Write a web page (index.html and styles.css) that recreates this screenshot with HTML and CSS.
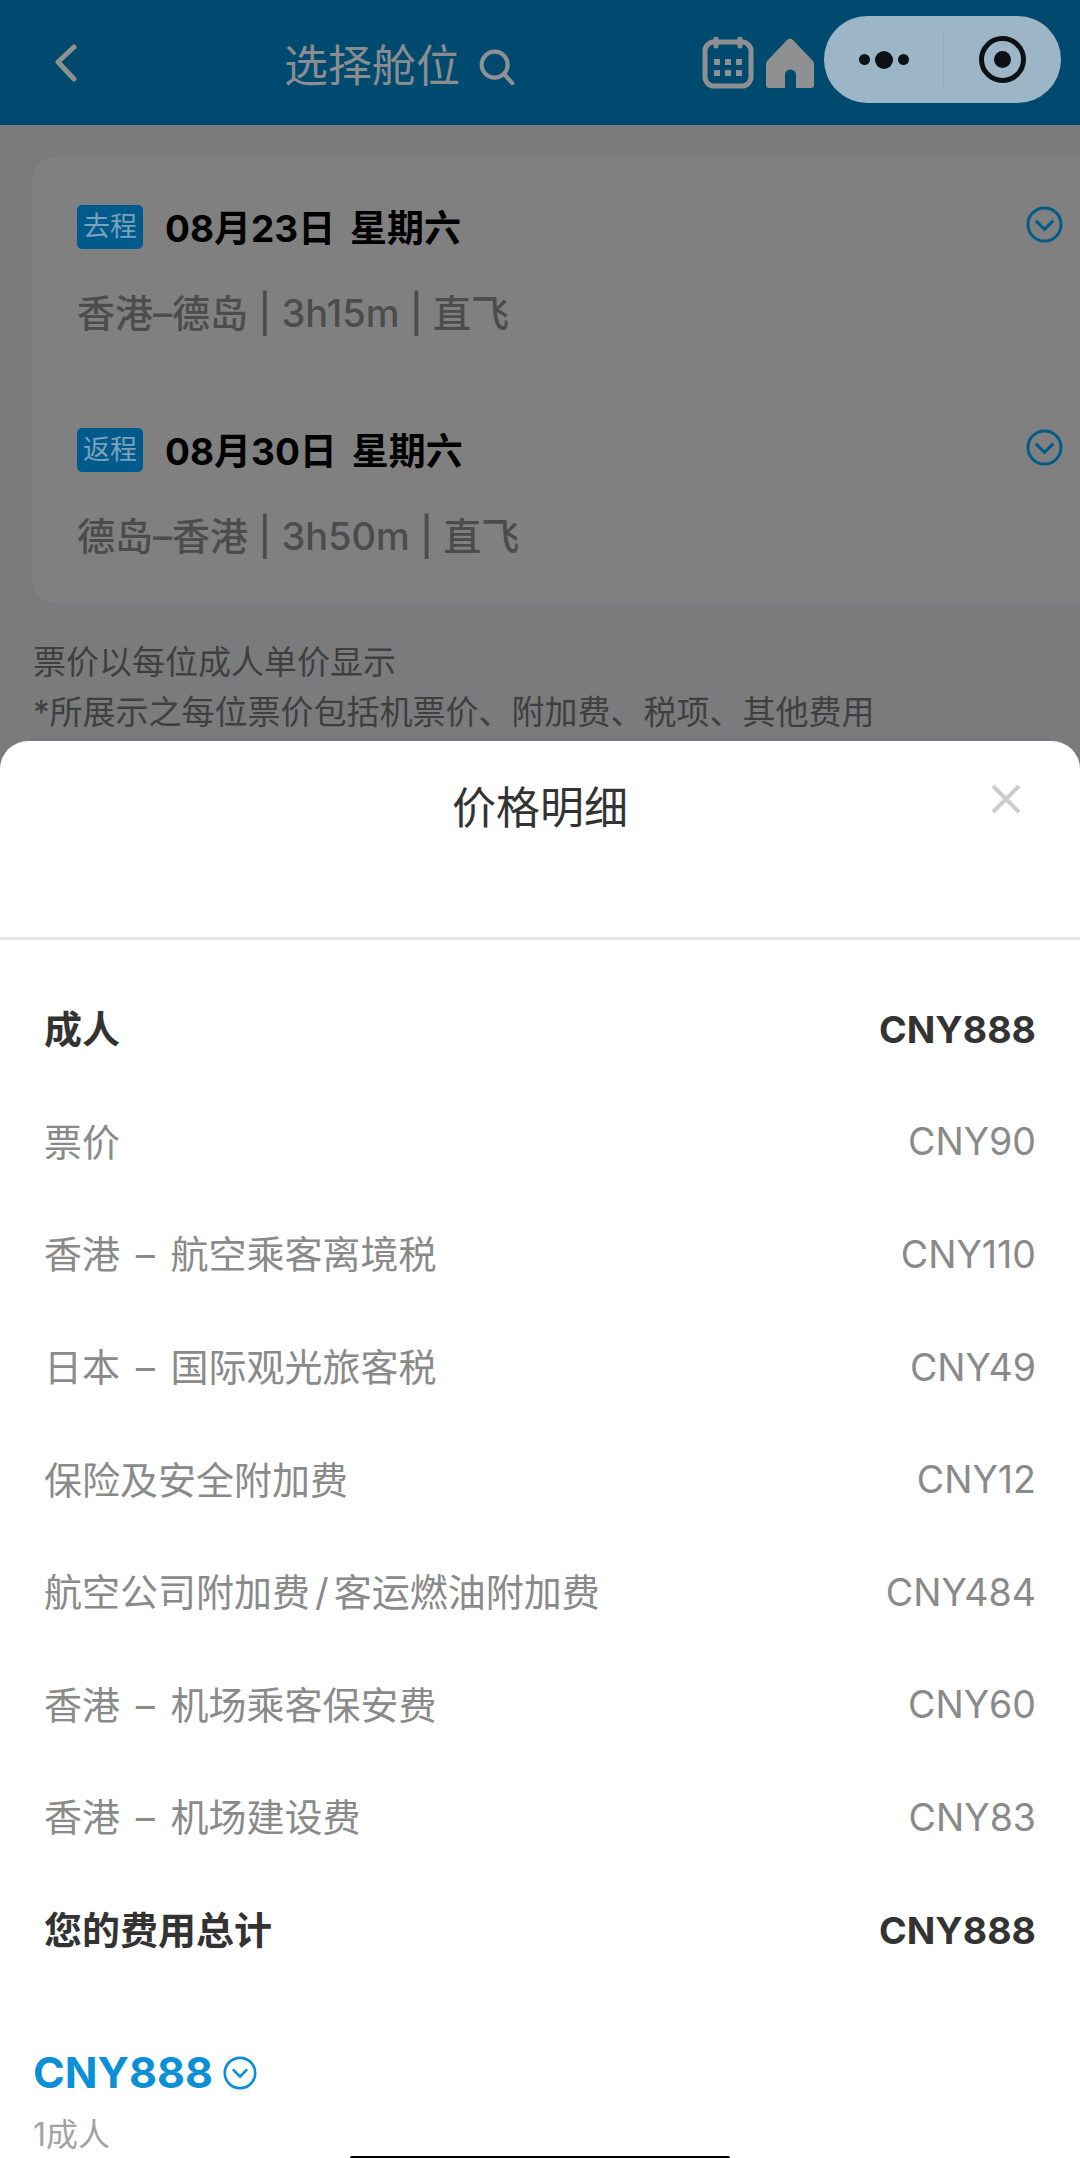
FILE: index.html
```html
<!DOCTYPE html>
<html lang="zh-CN">
<head>
  <meta charset="UTF-8" />
  <meta name="viewport" content="width=device-width, initial-scale=1.0"/>
  <title>选择舱位</title>
  <link rel="stylesheet" href="styles.css">
</head>
<body>
  <header class="topbar">
    <svg class="back-icon" viewBox="0 0 24 38"><path d="M20 3 4 18l16 17" /></svg>
    <div class="topbar-title">
      <span>选择舱位</span>
      <svg class="search-icon" viewBox="0 0 40 40"><circle cx="18" cy="18" r="14" /><path d="m28 28 9 10" /></svg>
    </div>
    <svg class="calendar-icon" viewBox="0 0 52 52">
      <rect x="3" y="5" width="46" height="44" rx="9" />
      <path d="M14 2v7M38 2v7" />
      <path class="dots" d="M12 22h6v6h-6zM23 22h6v6h-6zM34 22h6v6h-6zM12 33h6v6h-6zM23 33h6v6h-6zM34 33h6v6h-6z" />
    </svg>
    <svg class="home-icon" viewBox="0 0 48 50"><path d="M21 2a4 4 0 0 1 6 0l19 20a5 5 0 0 1 2 4v21a3 3 0 0 1-3 3H30V37a5 5 0 0 0-11 0v13H3a3 3 0 0 1-3-3V26a5 5 0 0 1 2-4z" /></svg>
    <div class="capsule">
      <div class="capsule-more"><i class="dot"></i><i class="dot dot-big"></i><i class="dot"></i></div>
      <div class="capsule-close"><i class="ring"></i></div>
    </div>
  </header>

  <main class="content">
    <section class="trip-card">
      <div class="trip">
        <div class="trip-head">
          <span class="tag">去程</span>
          <span class="trip-date">08月23日 星期六</span>
          <svg class="chevron-icon" viewBox="0 0 38 38"><circle cx="19" cy="19" r="17" /><path d="m10 15 9 9 9-9" /></svg>
        </div>
        <p class="trip-info">香港–德岛 | 3h15m | 直飞</p>
      </div>
      <div class="trip">
        <div class="trip-head">
          <span class="tag">返程</span>
          <span class="trip-date">08月30日 星期六</span>
          <svg class="chevron-icon" viewBox="0 0 38 38"><circle cx="19" cy="19" r="17" /><path d="m10 15 9 9 9-9" /></svg>
        </div>
        <p class="trip-info">德岛–香港 | 3h50m | 直飞</p>
      </div>
    </section>
    <p class="note">票价以每位成人单价显示</p>
    <p class="note">*所展示之每位票价包括机票价、附加费、税项、其他费用</p>
  </main>

  <!-- 价格明细弹层 -->
  <section class="sheet">
    <div class="sheet-head">
      <h2 class="sheet-title">价格明细</h2>
      <svg class="close-icon" viewBox="0 0 32 32"><path d="m3 3 26 26M29 3 3 29" /></svg>
    </div>
    <ul class="price-list">
      <li class="price-row strong"><span class="price-name">成人</span><span class="price-value">CNY888</span></li>
      <li class="price-row"><span class="price-name">票价</span><span class="price-value">CNY90</span></li>
      <li class="price-row"><span class="price-name">香港 – 航空乘客离境税</span><span class="price-value">CNY110</span></li>
      <li class="price-row"><span class="price-name">日本 – 国际观光旅客税</span><span class="price-value">CNY49</span></li>
      <li class="price-row"><span class="price-name">保险及安全附加费</span><span class="price-value">CNY12</span></li>
      <li class="price-row"><span class="price-name">航空公司附加费<span class="slash">/</span>客运燃油附加费</span><span class="price-value">CNY484</span></li>
      <li class="price-row"><span class="price-name">香港 – 机场乘客保安费</span><span class="price-value">CNY60</span></li>
      <li class="price-row"><span class="price-name">香港 – 机场建设费</span><span class="price-value">CNY83</span></li>
      <li class="price-row strong"><span class="price-name">您的费用总计</span><span class="price-value">CNY888</span></li>
    </ul>
    <div class="sheet-foot">
      <div class="total">
        <span>CNY888</span>
        <svg class="total-icon" viewBox="0 0 38 38"><circle cx="19" cy="19" r="17" /><path d="m11 15 8 8 8-8" /></svg>
      </div>
      <div class="passengers">1成人</div>
    </div>
  </section>
  <div class="home-bar"></div>
</body>
</html>
```

FILE: styles.css
```css
* {
  margin: 0;
  padding: 0;
  box-sizing: border-box;
}

body {
  position: relative;
  width: 1080px;
  height: 2158px;
  overflow: hidden;
  font-family: Inter, "Noto Sans CJK SC", sans-serif;
  background-color: #7b7b7d;
}

svg {
  display: block;
  flex: none;
  fill: none;
}

/* top bar */
.topbar {
  display: flex;
  align-items: center;
  height: 125px;
  padding: 0 19px 0 54px;
  background-color: #004a70;
}

.back-icon {
  width: 24px;
  height: 38px;
  stroke: #8e9092;
  stroke-width: 5;
  stroke-linecap: round;
  stroke-linejoin: round;
}

.topbar-title {
  display: flex;
  align-items: center;
  gap: 18px;
  margin-left: 206px;
  font-size: 44px;
  color: #8a8d90;
}

.search-icon {
  width: 37px;
  height: 37px;
  margin-top: 8px;
  stroke: #8e9092;
  stroke-width: 4.5;
  stroke-linecap: round;
}

.calendar-icon {
  width: 52px;
  height: 52px;
  margin-left: 187px;
  stroke: #8e9092;
  stroke-width: 5;
  stroke-linecap: round;
}

.calendar-icon .dots {
  fill: #8e9092;
  stroke: none;
}

.home-icon {
  width: 48px;
  height: 50px;
  margin-left: 12px;
  fill: #8e9092;
}

.capsule {
  display: flex;
  align-items: center;
  width: 237px;
  height: 87px;
  margin-left: auto;
  margin-bottom: 6px;
  border-radius: 44px;
  background-color: #9db6c7;
}

.capsule-more {
  display: flex;
  align-items: center;
  justify-content: center;
  gap: 5px;
  width: 120px;
  height: 56px;
  border-right: 1px solid #93acbd;
}

.dot {
  width: 11px;
  height: 11px;
  border-radius: 50%;
  background-color: #0d1114;
}

.dot-big {
  width: 18px;
  height: 18px;
}

.capsule-close {
  display: flex;
  flex: 1;
  justify-content: center;
}

.ring {
  display: flex;
  align-items: center;
  justify-content: center;
  width: 47px;
  height: 47px;
  border: 5px solid #0d1114;
  border-radius: 50%;
}

.ring::after {
  content: "";
  width: 17px;
  height: 17px;
  border-radius: 50%;
  background-color: #0d1114;
}

/* dimmed page behind the sheet */
.content {
  padding: 32px 0 0 33px;
}

.trip-card {
  display: flex;
  flex-direction: column;
  gap: 91px;
  height: 446px;
  margin: 0 0 34px -1px;
  padding: 48px 17px 0 45px;
  border-radius: 24px 0 0 24px;
  background-color: #808080;
}

.trip-head {
  display: flex;
  align-items: center;
  height: 44px;
}

.tag {
  width: 66px;
  height: 44px;
  border-radius: 5px;
  font-size: 27px;
  line-height: 44px;
  text-align: center;
  color: #7ba2b8;
  background-color: #005b8c;
}

.trip-date {
  margin: 0 0 3px 22px;
  font-size: 37px;
  font-weight: 700;
  word-spacing: 6px;
  color: #000;
}

.chevron-icon {
  width: 37px;
  height: 37px;
  margin: 0 0 5px auto;
  stroke: #005c85;
  stroke-width: 3;
}

.trip-info {
  margin-top: 40px;
  font-size: 38px;
  font-weight: 500;
  line-height: 48px;
  color: #4c4c4c;
}

.note {
  font-size: 33px;
  line-height: 50px;
  color: #3f3f40;
}

/* price sheet */
.sheet {
  position: absolute;
  top: 741px;
  left: 0;
  right: 0;
  bottom: 0;
  border-radius: 28px 28px 0 0;
  background-color: #fff;
}

.sheet-head {
  position: relative;
  height: 199px;
  border-bottom: 3px solid #e6e6e6;
}

.sheet-title {
  padding-top: 36px;
  font-size: 44px;
  font-weight: 400;
  line-height: 62px;
  text-align: center;
  color: #333;
}

.close-icon {
  position: absolute;
  top: 42px;
  right: 58px;
  width: 32px;
  height: 32px;
  stroke: #ccc;
  stroke-width: 4;
}

.price-list {
  padding: 33px 44px 0;
  list-style: none;
}

.price-row {
  display: flex;
  align-items: center;
  justify-content: space-between;
  height: 112.6px;
  font-size: 38px;
  color: #8a8a8a;
}

.price-row.strong {
  font-weight: 700;
  color: #333;
}

.price-name {
  margin-bottom: 5px;
  word-spacing: 5px;
}

.price-value {
  font-size: 37.5px;
}

.slash {
  margin: 0 5px;
}

.sheet-foot {
  padding: 60px 33px 0;
}

.total {
  display: flex;
  align-items: center;
  gap: 10px;
  font-size: 43px;
  font-weight: 700;
  color: #0b8fd6;
}

.total-icon {
  width: 34px;
  height: 34px;
  margin-top: 2px;
  stroke: #0b8fd6;
  stroke-width: 3;
}

.passengers {
  margin-top: 11px;
  font-size: 32px;
  color: #a3a3a3;
}

.home-bar {
  position: absolute;
  left: 350px;
  bottom: 0;
  width: 380px;
  height: 2px;
  border-radius: 2px 2px 0 0;
  background-color: #000;
}
```
